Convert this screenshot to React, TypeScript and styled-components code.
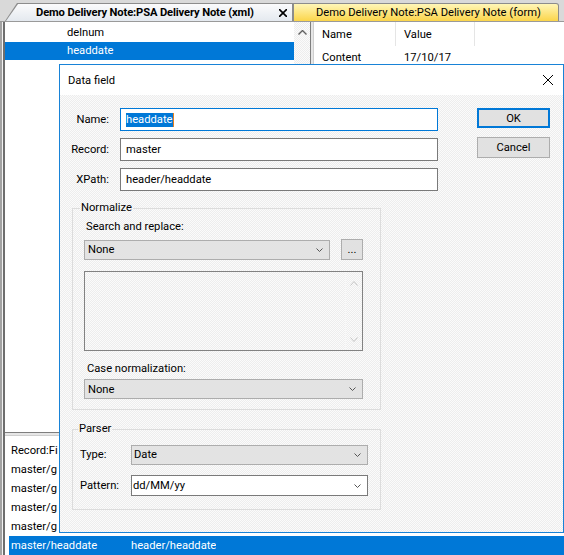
import React from "react";
import styled, { createGlobalStyle, css } from "styled-components";

const GlobalStyle = createGlobalStyle`
  html, body { margin: 0; padding: 0; background: #fff; }
  body {
    font-family: Roboto, "Noto Sans", sans-serif;
    font-size: 11.2px;
    color: #000;
  }
  * { box-sizing: border-box; }
`;

// windows-ish dithered face colour
const dither = css`
  background-color: #ededed;
  background-image: repeating-conic-gradient(#fbfbfb 0 25%, transparent 0 50%);
  background-size: 2px 2px;
`;

const Screen = styled.div`
  position: relative;
  width: 564px;
  height: 555px;
  overflow: hidden;
  display: flex;
  flex-direction: column;
  background: #fff;
`;

/* ---------- document tabs ---------- */

const TabStrip = styled.div`
  flex: none;
  height: 22px;
  display: flex;
  align-items: flex-end;
  padding-left: 5px;
  background: #d9d9d9;
  border-bottom: 1px solid #9a9a9a;
`;

const TabEdge = styled.div<{ $active?: boolean }>`
  height: 18px;
  padding: 1px 1px 0 1px;
  background: #8c8c8c;
  position: relative;
  z-index: ${(p) => (p.$active ? 2 : 1)};
  clip-path: ${(p) =>
    p.$active ? "polygon(0 100%, 12px 0, 100% 0, 100% 100%)" : "none"};
  border-radius: ${(p) => (p.$active ? "0" : "0 3px 0 0")};
  width: ${(p) => (p.$active ? "288px" : "266px")};
`;

const TabFace = styled.div<{ $active?: boolean }>`
  height: 100%;
  display: flex;
  align-items: center;
  white-space: nowrap;
  font-weight: ${(p) => (p.$active ? 700 : 400)};
  letter-spacing: ${(p) => (p.$active ? "-0.14px" : "0")};
  padding-left: ${(p) => (p.$active ? "30px" : "22px")};
  padding-right: 4px;
  border-radius: ${(p) => (p.$active ? "0" : "0 2px 0 0")};
  clip-path: ${(p) =>
    p.$active ? "polygon(0 100%, 12px 0, 100% 0, 100% 100%)" : "none"};
  background: ${(p) =>
    p.$active
      ? "linear-gradient(#fbfbfc, #e4e9ef)"
      : "linear-gradient(#fff6b8, #fbd54a)"};
`;

const TabClose = styled.span`
  margin-left: auto;
  margin-right: 1px;
  display: flex;
`;

/* ---------- main window ---------- */

const Frame = styled.div`
  flex: 1;
  display: flex;
  flex-direction: column;
  padding-left: 5px;
  box-shadow: inset 2px 0 #a3a3a3, inset 3px 0 #f2f2f2, inset 5px 0 #6e6e6e;
`;

const TopArea = styled.div`
  flex: none;
  height: 410px;
  display: flex;
`;

const TreePane = styled.div`
  width: 305px;
  display: flex;
`;

const TreeList = styled.div`
  flex: 1;
  padding-top: 2px;
  background: #fff;
`;

const TreeRow = styled.div<{ $selected?: boolean }>`
  height: 18px;
  line-height: 18px;
  padding-left: 62px;
  color: ${(p) => (p.$selected ? "#fff" : "#000")};
  background: ${(p) => (p.$selected ? "#0078d7" : "transparent")};
`;

const ScrollTrack = styled.div`
  width: 16px;
  ${dither};
`;

const ScrollButton = styled.div`
  height: 17px;
  margin-top: 2px;
  display: flex;
  align-items: center;
  justify-content: center;
`;

const VSplit = styled.div`
  width: 4px;
  background: #e6e6e6;
  border-left: 1px solid #7e7e7e;
  border-right: 1px solid #cfcfcf;
`;

const PropPane = styled.div`
  flex: 1;
  background: #fff;
`;

const PropRow = styled.div<{ $height: number }>`
  display: flex;
  height: ${(p) => p.$height}px;
  align-items: center;
`;

const PropCell = styled.div<{ $width?: number; $header?: boolean }>`
  width: ${(p) => (p.$width ? `${p.$width}px` : "auto")};
  flex: ${(p) => (p.$width ? "none" : 1)};
  height: 100%;
  display: flex;
  align-items: center;
  padding-left: 8px;
  border-right: ${(p) => (p.$header ? "1px solid #e5e5e5" : "none")};
`;

const HSplit = styled.div`
  flex: none;
  height: 4px;
  background: #e6e6e6;
  border-top: 1px solid #7e7e7e;
  border-bottom: 1px solid #cfcfcf;
`;

const BottomPane = styled.div`
  flex: 1;
  padding: 5px 0 0 4px;
  background: #fff;
`;

const GridRow = styled.div<{ $selected?: boolean }>`
  display: flex;
  height: 19px;
  line-height: 19px;
  padding-left: 2px;
  white-space: nowrap;
  color: ${(p) => (p.$selected ? "#fff" : "#000")};
  background: ${(p) => (p.$selected ? "#0078d7" : "transparent")};
`;

const GridCell = styled.span<{ $width?: number }>`
  width: ${(p) => (p.$width ? `${p.$width}px` : "auto")};
  flex: none;
  overflow: hidden;
`;

/* ---------- dialog ---------- */

const Dialog = styled.div`
  position: absolute;
  left: 59px;
  top: 64px;
  width: 505px;
  height: 469px;
  border: 1px solid #1883d7;
  background: #fff;
  display: flex;
  flex-direction: column;
  z-index: 5;
`;

const TitleBar = styled.div`
  flex: none;
  height: 30px;
  display: flex;
  align-items: center;
  padding-left: 8px;
  background: #fff;
`;

const CloseButton = styled.div`
  margin-left: auto;
  width: 30px;
  height: 30px;
  display: flex;
  align-items: center;
  justify-content: center;
`;

const Client = styled.div`
  flex: 1;
  display: flex;
  ${dither};
`;

const LeftColumn = styled.div`
  width: 378px;
  padding-top: 13px;
  display: flex;
  flex-direction: column;
`;

const FieldGrid = styled.div`
  display: grid;
  grid-template-columns: 49px 318px;
  grid-auto-rows: 23px;
  column-gap: 11px;
  row-gap: 7px;
  align-items: center;
`;

const FieldLabel = styled.label<{ $left?: boolean }>`
  text-align: ${(p) => (p.$left ? "left" : "right")};
  white-space: nowrap;
`;

const TextBox = styled.div<{ $focused?: boolean }>`
  height: 23px;
  display: flex;
  align-items: center;
  padding-left: 5px;
  background: #fff;
  border: 1px solid ${(p) => (p.$focused ? "#0078d7" : "#7a7a7a")};
  white-space: nowrap;
`;

const Selection = styled.span`
  background: #0078d7;
  color: #fff;
  line-height: 14px;
  padding-right: 1px;
  border-right: 1px solid #e8801c;
`;

const Group = styled.fieldset<{ $gap: number }>`
  margin: ${(p) => p.$gap}px 0 0 12px;
  width: 309px;
  padding: 0;
  border: 1px solid #dcdcdc;
  min-inline-size: 0;
`;

const Legend = styled.legend<{ $indent: number }>`
  padding: 0 1px;
  margin-left: ${(p) => p.$indent}px;
  line-height: 16px;
`;

const GroupBody = styled.div<{ $pad: string }>`
  padding: ${(p) => p.$pad};
`;

const Caption = styled.div<{ $top?: number; $left?: number }>`
  line-height: 16px;
  margin-top: ${(p) => p.$top ?? 0}px;
  padding-left: ${(p) => p.$left ?? 2}px;
  white-space: nowrap;
`;

const ComboRow = styled.div`
  margin-top: 4px;
  display: flex;
  align-items: center;
  justify-content: space-between;
  height: 21px;
`;

const Combo = styled.div<{ $editable?: boolean; $width: number; $pad?: number }>`
  width: ${(p) => p.$width}px;
  height: ${(p) => (p.$editable ? 21 : 20)}px;
  display: flex;
  align-items: center;
  padding-left: ${(p) => p.$pad ?? 3}px;
  padding-right: 6px;
  background: ${(p) => (p.$editable ? "#fff" : "#e3e3e3")};
  border: 1px solid ${(p) => (p.$editable ? "#7a7a7a" : "#adadad")};
  white-space: nowrap;

  svg {
    margin-left: auto;
  }
`;

const CaseCombo = styled(Combo)`
  margin-top: 2px;
`;

const SmallButton = styled.div`
  width: 22px;
  height: 21px;
  display: flex;
  align-items: flex-end;
  justify-content: center;
  padding-bottom: 4px;
  line-height: 10px;
  background: #e1e1e1;
  border: 1px solid #adadad;
`;

const ListBox = styled.div`
  margin-top: 11px;
  height: 80px;
  display: flex;
  justify-content: flex-end;
  border: 1px solid #828282;
`;

const ListScroll = styled.div`
  width: 17px;
  display: flex;
  flex-direction: column;
  justify-content: space-between;
  align-items: center;
  padding: 9px 0 8px;
  border-left: 1px solid #f7f7f7;
`;

const ParserGrid = styled.div`
  display: grid;
  grid-template-columns: 51px 237px;
  grid-auto-rows: 21px;
  row-gap: 10px;
  align-items: center;
`;

const ButtonColumn = styled.div`
  padding: 13px 0 0 39px;
  display: flex;
  flex-direction: column;
  gap: 9px;
`;

const PushButton = styled.div<{ $default?: boolean }>`
  width: 73px;
  height: ${(p) => (p.$default ? 20 : 21)}px;
  display: flex;
  align-items: center;
  justify-content: center;
  background: #e1e1e1;
  border: ${(p) => (p.$default ? "2px solid #0078d7" : "1px solid #adadad")};
`;

/* ---------- small drawings ---------- */

const Chevron = ({
  up,
  w = 7,
  h = 4,
  color = "#555",
  stroke = 1,
}: {
  up?: boolean;
  w?: number;
  h?: number;
  color?: string;
  stroke?: number;
}) => (
  <svg width={w} height={h} viewBox={`0 0 ${w} ${h}`}>
    <polyline
      points={
        up
          ? `0.5,${h - 0.5} ${w / 2},0.5 ${w - 0.5},${h - 0.5}`
          : `0.5,0.5 ${w / 2},${h - 0.5} ${w - 0.5},0.5`
      }
      fill="none"
      stroke={color}
      strokeWidth={stroke}
    />
  </svg>
);

const Cross = ({ size, stroke }: { size: number; stroke: number }) => (
  <svg width={size} height={size} viewBox={`0 0 ${size} ${size}`}>
    <line x1="0" y1="0" x2={size} y2={size} stroke="#000" strokeWidth={stroke} />
    <line x1={size} y1="0" x2="0" y2={size} stroke="#000" strokeWidth={stroke} />
  </svg>
);

// rows of the record list; only their start shows left of the dialog
const recordRows = ["master/g", "master/g", "master/g", "master/g"];

export default function App() {
  return (
    <Screen>
      <GlobalStyle />

      <TabStrip>
        <TabEdge $active>
          <TabFace $active>
            Demo Delivery Note:PSA Delivery Note (xml)
            <TabClose>
              <Cross size={8} stroke={1.6} />
            </TabClose>
          </TabFace>
        </TabEdge>
        <TabEdge>
          <TabFace>Demo Delivery Note:PSA Delivery Note (form)</TabFace>
        </TabEdge>
      </TabStrip>

      <Frame>
        <TopArea>
          <TreePane>
            <TreeList>
              <TreeRow>delnum</TreeRow>
              <TreeRow $selected>headdate</TreeRow>
            </TreeList>
            <ScrollTrack>
              <ScrollButton>
                <Chevron up w={9} h={5} color="#606060" stroke={1.4} />
              </ScrollButton>
            </ScrollTrack>
          </TreePane>
          <VSplit />
          <PropPane>
            <PropRow $height={24}>
              <PropCell $width={82} $header>
                Name
              </PropCell>
              <PropCell $width={79} $header>
                Value
              </PropCell>
              <PropCell />
            </PropRow>
            <PropRow $height={22}>
              <PropCell $width={82}>Content</PropCell>
              <PropCell $width={79}>17/10/17</PropCell>
            </PropRow>
          </PropPane>
        </TopArea>

        <HSplit />

        <BottomPane>
          <GridRow>
            <GridCell>Record:Fi</GridCell>
          </GridRow>
          {recordRows.map((rec, i) => (
            <GridRow key={i}>
              <GridCell>{rec}</GridCell>
            </GridRow>
          ))}
          <GridRow $selected>
            <GridCell $width={120}>master/headdate</GridCell>
            <GridCell>header/headdate</GridCell>
          </GridRow>
        </BottomPane>
      </Frame>

      <Dialog>
        <TitleBar>
          Data field
          <CloseButton>
            <Cross size={10} stroke={1} />
          </CloseButton>
        </TitleBar>

        <Client>
          <LeftColumn>
            <FieldGrid>
              <FieldLabel>Name:</FieldLabel>
              <TextBox $focused>
                <Selection>headdate</Selection>
              </TextBox>
              <FieldLabel>Record:</FieldLabel>
              <TextBox>master</TextBox>
              <FieldLabel>XPath:</FieldLabel>
              <TextBox>header/headdate</TextBox>
            </FieldGrid>

            <Group $gap={9}>
              <Legend $indent={7}>Normalize</Legend>
              <GroupBody $pad="3px 17px 10px 11px">
                <Caption>Search and replace:</Caption>
                <ComboRow>
                  <Combo $width={246}>
                    None
                    <Chevron />
                  </Combo>
                  <SmallButton>...</SmallButton>
                </ComboRow>
                <ListBox>
                  <ListScroll>
                    <Chevron up w={8} h={5} color="#c4c4c4" />
                    <Chevron w={8} h={5} color="#c4c4c4" />
                  </ListScroll>
                </ListBox>
                <Caption $top={10} $left={3}>
                  Case normalization:
                </Caption>
                <CaseCombo $width={279}>
                  None
                  <Chevron />
                </CaseCombo>
              </GroupBody>
            </Group>

            <Group $gap={11}>
              <Legend $indent={5}>Parser</Legend>
              <GroupBody $pad="7px 12px 13px 7px">
                <ParserGrid>
                  <FieldLabel $left>Type:</FieldLabel>
                  <Combo $width={237} $pad={2}>
                    Date
                    <Chevron />
                  </Combo>
                  <FieldLabel $left>Pattern:</FieldLabel>
                  <Combo $width={237} $editable $pad={1}>
                    dd/MM/yy
                    <Chevron />
                  </Combo>
                </ParserGrid>
              </GroupBody>
            </Group>
          </LeftColumn>

          <ButtonColumn>
            <PushButton $default>OK</PushButton>
            <PushButton>Cancel</PushButton>
          </ButtonColumn>
        </Client>
      </Dialog>
    </Screen>
  );
}
